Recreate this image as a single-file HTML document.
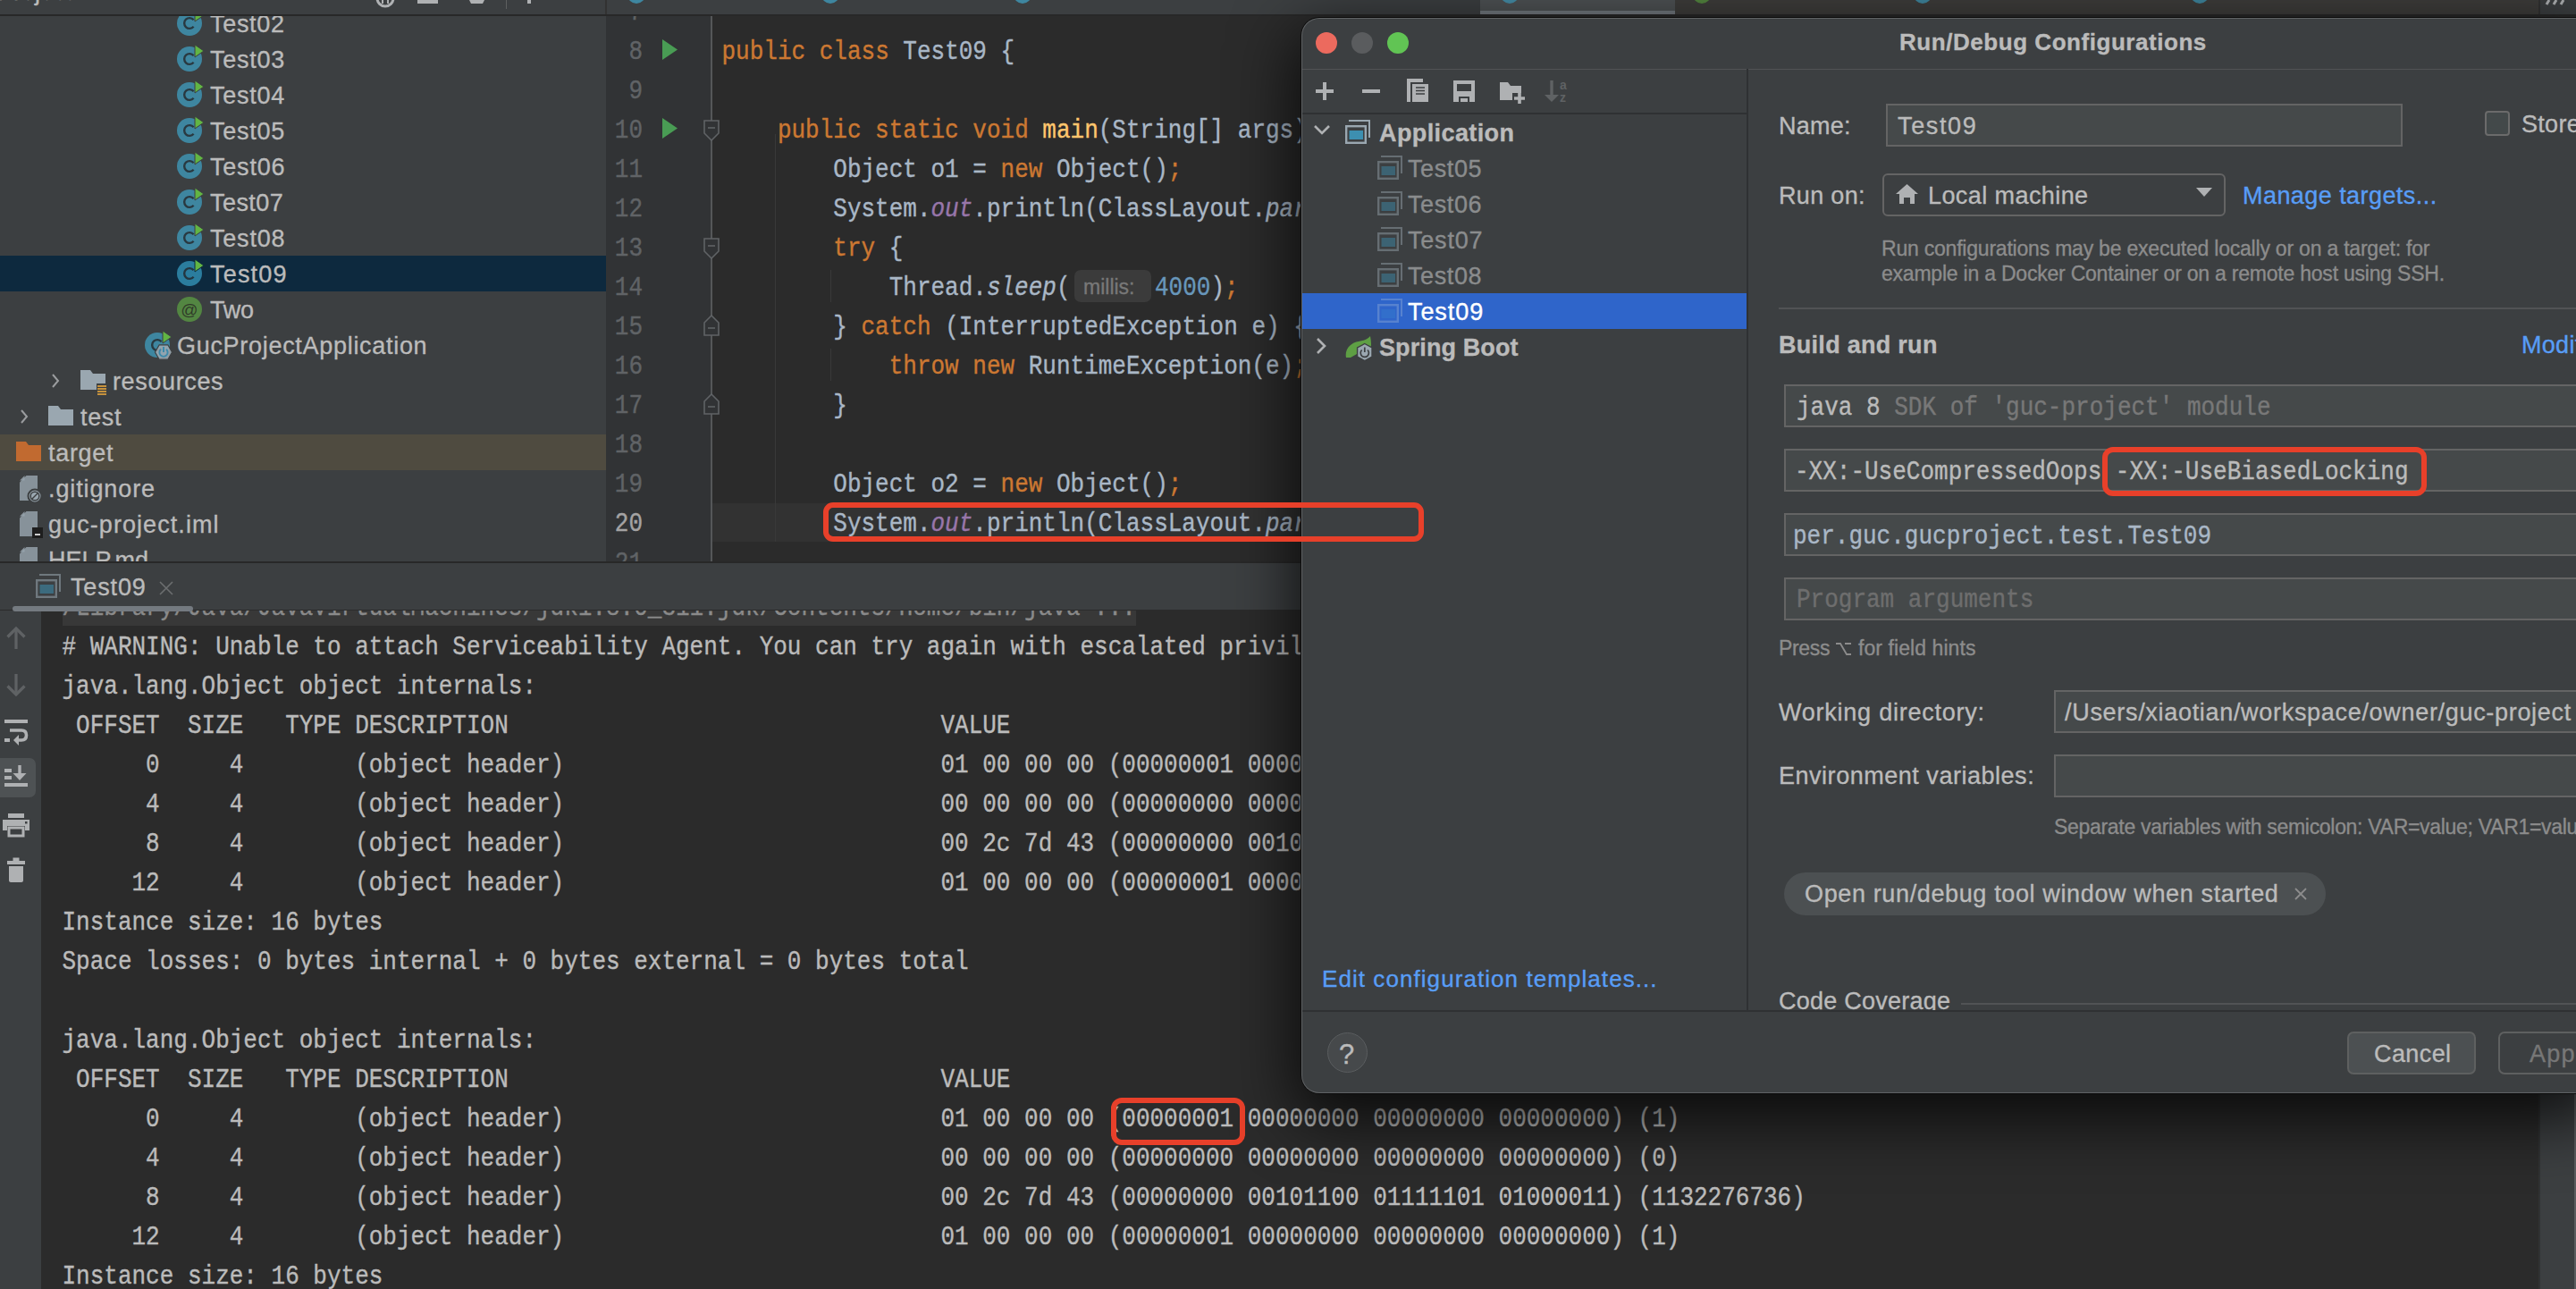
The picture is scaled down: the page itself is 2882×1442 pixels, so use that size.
<!DOCTYPE html>
<html><head><meta charset="utf-8"><style>
html,body{margin:0;padding:0;width:2882px;height:1442px;overflow:hidden;background:#2b2b2b;}
div{position:absolute;box-sizing:border-box;}
.t{line-height:0;white-space:pre;-webkit-text-stroke:0.35px currentColor;}
</style></head><body>
<div style="left:0px;top:0px;width:2882px;height:16px;background:#3c3f41;"></div><div style="left:0px;top:16px;width:2882px;height:2px;background:#282828;"></div><div style="left:0px;top:18px;width:678px;height:610px;background:#3c3f41;"></div><div style="left:678px;top:18px;width:119px;height:610px;background:#313335;"></div><div style="left:797px;top:18px;width:2085px;height:610px;background:#2b2b2b;"></div><div style="left:0px;top:628px;width:2882px;height:2px;background:#282828;"></div><div style="left:0px;top:630px;width:2882px;height:52px;background:#3c3f41;"></div><div style="left:0px;top:683px;width:46px;height:759px;background:#3c3f41;"></div><div style="left:46px;top:683px;width:2796px;height:759px;background:#2b2b2b;"></div><div style="left:2842px;top:683px;width:38px;height:759px;background:#3c3f41;"></div><div style="left:2840px;top:683px;width:2px;height:759px;background:#303233;"></div><div style="left:2880px;top:683px;width:2px;height:759px;background:#5a5c5e;"></div><div style="left:0px;top:18px;width:678px;height:610px;overflow:hidden;"><div style="left:0px;top:268px;width:678px;height:40px;background:#0d293e;"></div><div style="left:0px;top:468px;width:678px;height:40px;background:#4f4b40;"></div><svg style="position:absolute;left:196px;top:-10px;" width="36" height="36" viewBox="0 0 36 36"><circle cx="16" cy="18" r="14" fill="#40b6e0" fill-opacity="0.6"/><path d="M20.6 14.2 A5.9 5.9 0 1 0 20.6 21.8" stroke="#231f20" stroke-opacity="0.75" stroke-width="2.4" fill="none"/><path d="M22 2 L32 9 L22 16Z" fill="#62b543" stroke="#3c3f41" stroke-width="1"/></svg><div class="t" id="f0" style="left:235px;top:9px;font-family:'Liberation Sans', sans-serif;font-size:27px;color:#bbbbbb;letter-spacing:0.680px;">Test02</div><svg style="position:absolute;left:196px;top:30px;" width="36" height="36" viewBox="0 0 36 36"><circle cx="16" cy="18" r="14" fill="#40b6e0" fill-opacity="0.6"/><path d="M20.6 14.2 A5.9 5.9 0 1 0 20.6 21.8" stroke="#231f20" stroke-opacity="0.75" stroke-width="2.4" fill="none"/><path d="M22 2 L32 9 L22 16Z" fill="#62b543" stroke="#3c3f41" stroke-width="1"/></svg><div class="t" id="f1" style="left:235px;top:49px;font-family:'Liberation Sans', sans-serif;font-size:27px;color:#bbbbbb;letter-spacing:0.720px;">Test03</div><svg style="position:absolute;left:196px;top:70px;" width="36" height="36" viewBox="0 0 36 36"><circle cx="16" cy="18" r="14" fill="#40b6e0" fill-opacity="0.6"/><path d="M20.6 14.2 A5.9 5.9 0 1 0 20.6 21.8" stroke="#231f20" stroke-opacity="0.75" stroke-width="2.4" fill="none"/><path d="M22 2 L32 9 L22 16Z" fill="#62b543" stroke="#3c3f41" stroke-width="1"/></svg><div class="t" id="f2" style="left:235px;top:89px;font-family:'Liberation Sans', sans-serif;font-size:27px;color:#bbbbbb;letter-spacing:0.720px;">Test04</div><svg style="position:absolute;left:196px;top:110px;" width="36" height="36" viewBox="0 0 36 36"><circle cx="16" cy="18" r="14" fill="#40b6e0" fill-opacity="0.6"/><path d="M20.6 14.2 A5.9 5.9 0 1 0 20.6 21.8" stroke="#231f20" stroke-opacity="0.75" stroke-width="2.4" fill="none"/><path d="M22 2 L32 9 L22 16Z" fill="#62b543" stroke="#3c3f41" stroke-width="1"/></svg><div class="t" id="f3" style="left:235px;top:129px;font-family:'Liberation Sans', sans-serif;font-size:27px;color:#bbbbbb;letter-spacing:0.720px;">Test05</div><svg style="position:absolute;left:196px;top:150px;" width="36" height="36" viewBox="0 0 36 36"><circle cx="16" cy="18" r="14" fill="#40b6e0" fill-opacity="0.6"/><path d="M20.6 14.2 A5.9 5.9 0 1 0 20.6 21.8" stroke="#231f20" stroke-opacity="0.75" stroke-width="2.4" fill="none"/><path d="M22 2 L32 9 L22 16Z" fill="#62b543" stroke="#3c3f41" stroke-width="1"/></svg><div class="t" id="f4" style="left:235px;top:169px;font-family:'Liberation Sans', sans-serif;font-size:27px;color:#bbbbbb;letter-spacing:0.800px;">Test06</div><svg style="position:absolute;left:196px;top:190px;" width="36" height="36" viewBox="0 0 36 36"><circle cx="16" cy="18" r="14" fill="#40b6e0" fill-opacity="0.6"/><path d="M20.6 14.2 A5.9 5.9 0 1 0 20.6 21.8" stroke="#231f20" stroke-opacity="0.75" stroke-width="2.4" fill="none"/><path d="M22 2 L32 9 L22 16Z" fill="#62b543" stroke="#3c3f41" stroke-width="1"/></svg><div class="t" id="f5" style="left:235px;top:209px;font-family:'Liberation Sans', sans-serif;font-size:27px;color:#bbbbbb;letter-spacing:0.440px;">Test07</div><svg style="position:absolute;left:196px;top:230px;" width="36" height="36" viewBox="0 0 36 36"><circle cx="16" cy="18" r="14" fill="#40b6e0" fill-opacity="0.6"/><path d="M20.6 14.2 A5.9 5.9 0 1 0 20.6 21.8" stroke="#231f20" stroke-opacity="0.75" stroke-width="2.4" fill="none"/><path d="M22 2 L32 9 L22 16Z" fill="#62b543" stroke="#3c3f41" stroke-width="1"/></svg><div class="t" id="f6" style="left:235px;top:249px;font-family:'Liberation Sans', sans-serif;font-size:27px;color:#bbbbbb;letter-spacing:0.800px;">Test08</div><svg style="position:absolute;left:196px;top:270px;" width="36" height="36" viewBox="0 0 36 36"><circle cx="16" cy="18" r="14" fill="#40b6e0" fill-opacity="0.6"/><path d="M20.6 14.2 A5.9 5.9 0 1 0 20.6 21.8" stroke="#231f20" stroke-opacity="0.75" stroke-width="2.4" fill="none"/><path d="M22 2 L32 9 L22 16Z" fill="#62b543" stroke="#0d293e" stroke-width="1"/></svg><div class="t" id="f7" style="left:235px;top:289px;font-family:'Liberation Sans', sans-serif;font-size:27px;color:#bbbbbb;letter-spacing:1.200px;">Test09</div><svg style="position:absolute;left:196px;top:310px;" width="36" height="36" viewBox="0 0 36 36"><circle cx="16" cy="18" r="14" fill="#62b543" fill-opacity="0.6"/><text x="16" y="25" text-anchor="middle" font-family="Liberation Sans" font-size="19" fill="#231f20" fill-opacity="0.75">@</text></svg><div class="t" id="f8" style="left:235px;top:329px;font-family:'Liberation Sans', sans-serif;font-size:27px;color:#bbbbbb;letter-spacing:-0.300px;">Two</div><svg style="position:absolute;left:160px;top:350px;" width="36" height="36" viewBox="0 0 36 36"><circle cx="16" cy="18" r="14" fill="#40b6e0" fill-opacity="0.6"/><path d="M20.6 14.2 A5.9 5.9 0 1 0 20.6 21.8" stroke="#231f20" stroke-opacity="0.75" stroke-width="2.4" fill="none"/><path d="M22 2 L32 9 L22 16Z" fill="#62b543" stroke="#3c3f41" stroke-width="1"/></svg><svg style="position:absolute;left:172px;top:366px;" width="22" height="20" viewBox="0 0 22 20"><path d="M1.5 10 L6.2 1.8 H15.8 L20.5 10 L15.8 18.2 H6.2Z" fill="#9aa7b0" fill-opacity="0.9" stroke="#3c3f41" stroke-width="1.2"/><path d="M8 6.8 A4.6 4.6 0 1 0 14 6.8" fill="none" stroke="#3d8aab" stroke-width="1.9"/><path d="M11 4 V10" stroke="#3d8aab" stroke-width="2"/></svg><div class="t" id="f9" style="left:198px;top:369px;font-family:'Liberation Sans', sans-serif;font-size:27px;color:#bbbbbb;letter-spacing:0.700px;">GucProjectApplication</div><svg style="position:absolute;left:54px;top:398px;" width="16" height="20" viewBox="0 0 16 20"><path d="M5 3 L11 10 L5 17" fill="none" stroke="#9b9d9f" stroke-width="2"/></svg><svg style="position:absolute;left:90px;top:396px;" width="28" height="22" viewBox="0 0 28 22"><path d="M0 0 H11 L14 4 H28 V22 H0Z" fill="#9aa7b0"/></svg><svg style="position:absolute;left:107px;top:410px;" width="14" height="14" viewBox="0 0 14 14"><rect x="1" y="1" width="12" height="12" fill="#3c3f41"/><path d="M2 4H12M2 7H12M2 10H12M2 13H12" stroke="#f4af3d" stroke-width="1.6"/></svg><div class="t" id="f10" style="left:126px;top:409px;font-family:'Liberation Sans', sans-serif;font-size:27px;color:#bbbbbb;letter-spacing:0.625px;">resources</div><svg style="position:absolute;left:19px;top:438px;" width="16" height="20" viewBox="0 0 16 20"><path d="M5 3 L11 10 L5 17" fill="none" stroke="#9b9d9f" stroke-width="2"/></svg><svg style="position:absolute;left:54px;top:436px;" width="28" height="22" viewBox="0 0 28 22"><path d="M0 0 H11 L14 4 H28 V22 H0Z" fill="#9aa7b0"/></svg><div class="t" id="f11" style="left:90px;top:449px;font-family:'Liberation Sans', sans-serif;font-size:27px;color:#bbbbbb;letter-spacing:0.667px;">test</div><svg style="position:absolute;left:18px;top:476px;" width="28" height="22" viewBox="0 0 28 22"><path d="M0 0 H11 L14 4 H28 V22 H0Z" fill="#c16a30"/></svg><div class="t" id="f12" style="left:54px;top:489px;font-family:'Liberation Sans', sans-serif;font-size:27px;color:#bbbbbb;letter-spacing:0.680px;">target</div><svg style="position:absolute;left:22px;top:514px;" width="22" height="28" viewBox="0 0 22 28"><path d="M7.5 0 H20 V28 H0 V7.5Z" fill="#9aa7b0" fill-opacity="0.8"/><path d="M0 5.5 L5.5 0 V5.5Z" fill="#9aa7b0" fill-opacity="0.8"/></svg><svg style="position:absolute;left:30px;top:528px;" width="18" height="18" viewBox="0 0 18 18"><circle cx="9" cy="9" r="7.5" fill="#9aa7b0" stroke="#3c3f41" stroke-width="2"/><circle cx="9" cy="9" r="4.8" fill="none" stroke="#3c3f41" stroke-width="1.5"/><path d="M5.5 12.5 L12.5 5.5" stroke="#3c3f41" stroke-width="1.5"/></svg><div class="t" id="f13" style="left:54px;top:529px;font-family:'Liberation Sans', sans-serif;font-size:27px;color:#bbbbbb;letter-spacing:0.889px;">.gitignore</div><svg style="position:absolute;left:22px;top:554px;" width="22" height="28" viewBox="0 0 22 28"><path d="M7.5 0 H20 V28 H0 V7.5Z" fill="#9aa7b0" fill-opacity="0.8"/><path d="M0 5.5 L5.5 0 V5.5Z" fill="#9aa7b0" fill-opacity="0.8"/></svg><div style="left:36px;top:572px;width:12px;height:12px;background:#1e1e1e;"></div><div style="left:39px;top:579px;width:6px;height:2px;background:#cccccc;"></div><div class="t" id="f14" style="left:54px;top:569px;font-family:'Liberation Sans', sans-serif;font-size:27px;color:#bbbbbb;letter-spacing:1.071px;">guc-project.iml</div><svg style="position:absolute;left:22px;top:594px;" width="22" height="28" viewBox="0 0 22 28"><path d="M7.5 0 H20 V28 H0 V7.5Z" fill="#9aa7b0" fill-opacity="0.8"/><path d="M0 5.5 L5.5 0 V5.5Z" fill="#9aa7b0" fill-opacity="0.8"/></svg><div class="t" style="left:54px;top:609px;font-family:'Liberation Sans', sans-serif;font-size:27px;color:#bbbbbb;">HELP.md</div></div><div style="left:678px;top:18px;width:2204px;height:610px;overflow:hidden;"><div style="left:119px;top:545px;width:2085px;height:43px;background:#323232;"></div><div style="left:189px;top:132px;width:1px;height:456px;background:#393939;"></div><div style="left:251px;top:284px;width:1px;height:36px;background:#393939;"></div><div style="left:251px;top:372px;width:1px;height:36px;background:#393939;"></div><div style="left:117px;top:0px;width:2px;height:610px;background:#555759;"></div><div class="t" style="left:25.399999999999977px;top:-3px;font-family:'Liberation Mono', monospace;font-size:26px;color:#606366;transform:scaleY(1.12);transform-origin:0 7px;">7</div><div class="t" style="left:25.399999999999977px;top:41px;font-family:'Liberation Mono', monospace;font-size:26px;color:#606366;transform:scaleY(1.12);transform-origin:0 7px;">8</div><div class="t" style="left:25.399999999999977px;top:85px;font-family:'Liberation Mono', monospace;font-size:26px;color:#606366;transform:scaleY(1.12);transform-origin:0 7px;">9</div><div class="t" style="left:9.799999999999955px;top:129px;font-family:'Liberation Mono', monospace;font-size:26px;color:#606366;transform:scaleY(1.12);transform-origin:0 7px;">10</div><div class="t" style="left:9.799999999999955px;top:173px;font-family:'Liberation Mono', monospace;font-size:26px;color:#606366;transform:scaleY(1.12);transform-origin:0 7px;">11</div><div class="t" style="left:9.799999999999955px;top:217px;font-family:'Liberation Mono', monospace;font-size:26px;color:#606366;transform:scaleY(1.12);transform-origin:0 7px;">12</div><div class="t" style="left:9.799999999999955px;top:261px;font-family:'Liberation Mono', monospace;font-size:26px;color:#606366;transform:scaleY(1.12);transform-origin:0 7px;">13</div><div class="t" style="left:9.799999999999955px;top:305px;font-family:'Liberation Mono', monospace;font-size:26px;color:#606366;transform:scaleY(1.12);transform-origin:0 7px;">14</div><div class="t" style="left:9.799999999999955px;top:349px;font-family:'Liberation Mono', monospace;font-size:26px;color:#606366;transform:scaleY(1.12);transform-origin:0 7px;">15</div><div class="t" style="left:9.799999999999955px;top:393px;font-family:'Liberation Mono', monospace;font-size:26px;color:#606366;transform:scaleY(1.12);transform-origin:0 7px;">16</div><div class="t" style="left:9.799999999999955px;top:437px;font-family:'Liberation Mono', monospace;font-size:26px;color:#606366;transform:scaleY(1.12);transform-origin:0 7px;">17</div><div class="t" style="left:9.799999999999955px;top:481px;font-family:'Liberation Mono', monospace;font-size:26px;color:#606366;transform:scaleY(1.12);transform-origin:0 7px;">18</div><div class="t" style="left:9.799999999999955px;top:525px;font-family:'Liberation Mono', monospace;font-size:26px;color:#606366;transform:scaleY(1.12);transform-origin:0 7px;">19</div><div class="t" style="left:9.799999999999955px;top:569px;font-family:'Liberation Mono', monospace;font-size:26px;color:#a4a3a3;transform:scaleY(1.12);transform-origin:0 7px;">20</div><div class="t" style="left:9.799999999999955px;top:613px;font-family:'Liberation Mono', monospace;font-size:26px;color:#606366;transform:scaleY(1.12);transform-origin:0 7px;">21</div><svg style="position:absolute;left:63px;top:26px;" width="17" height="23" viewBox="0 0 17 23"><path d="M0 0 L17 11.5 L0 23Z" fill="#499c54"/></svg><svg style="position:absolute;left:63px;top:114px;" width="17" height="23" viewBox="0 0 17 23"><path d="M0 0 L17 11.5 L0 23Z" fill="#499c54"/></svg><svg style="position:absolute;left:109px;top:116px;" width="18" height="24" viewBox="0 0 18 24"><path d="M1 1 H17 V15 L9 23 L1 15Z" fill="#313335" stroke="#606366" stroke-width="1.6"/><path d="M5 9 H13" stroke="#606366" stroke-width="1.6"/></svg><svg style="position:absolute;left:109px;top:248px;" width="18" height="24" viewBox="0 0 18 24"><path d="M1 1 H17 V15 L9 23 L1 15Z" fill="#313335" stroke="#606366" stroke-width="1.6"/><path d="M5 9 H13" stroke="#606366" stroke-width="1.6"/></svg><svg style="position:absolute;left:109px;top:334px;" width="18" height="24" viewBox="0 0 18 24"><path d="M1 23 H17 V9 L9 1 L1 9Z" fill="#313335" stroke="#606366" stroke-width="1.6"/><path d="M5 15 H13" stroke="#606366" stroke-width="1.6"/></svg><svg style="position:absolute;left:109px;top:422px;" width="18" height="24" viewBox="0 0 18 24"><path d="M1 23 H17 V9 L9 1 L1 9Z" fill="#313335" stroke="#606366" stroke-width="1.6"/><path d="M5 15 H13" stroke="#606366" stroke-width="1.6"/></svg><div class="t" style="left:129.5px;top:41px;font-family:'Liberation Mono', monospace;font-size:26px;color:#a9b7c6;transform:scaleY(1.12);transform-origin:0 7px;"><span style="color:#cc7832;">public class </span><span style="color:#a9b7c6;">Test09 {</span></div><div class="t" style="left:191.89999999999998px;top:129px;font-family:'Liberation Mono', monospace;font-size:26px;color:#a9b7c6;transform:scaleY(1.12);transform-origin:0 7px;"><span style="color:#cc7832;">public static void </span><span style="color:#ffc66d;">main</span><span style="color:#a9b7c6;">(String[] args) {</span></div><div class="t" style="left:254.29999999999995px;top:173px;font-family:'Liberation Mono', monospace;font-size:26px;color:#a9b7c6;transform:scaleY(1.12);transform-origin:0 7px;"><span style="color:#a9b7c6;">Object o1 = </span><span style="color:#cc7832;">new </span><span style="color:#a9b7c6;">Object()</span><span style="color:#cc7832;">;</span></div><div class="t" style="left:254.29999999999995px;top:217px;font-family:'Liberation Mono', monospace;font-size:26px;color:#a9b7c6;transform:scaleY(1.12);transform-origin:0 7px;"><span style="color:#a9b7c6;">System.</span><span style="color:#9876aa;font-style:italic;">out</span><span style="color:#a9b7c6;">.println(ClassLayout.</span><span style="color:#a9b7c6;font-style:italic;">parseInstance</span><span style="color:#a9b7c6;">(o1).toPrintable())</span><span style="color:#cc7832;">;</span></div><div class="t" style="left:254.29999999999995px;top:261px;font-family:'Liberation Mono', monospace;font-size:26px;color:#a9b7c6;transform:scaleY(1.12);transform-origin:0 7px;"><span style="color:#cc7832;">try </span><span style="color:#a9b7c6;">{</span></div><div class="t" style="left:316.70000000000005px;top:305px;font-family:'Liberation Mono', monospace;font-size:26px;color:#a9b7c6;transform:scaleY(1.12);transform-origin:0 7px;"><span style="color:#a9b7c6;">Thread.</span><span style="color:#a9b7c6;font-style:italic;">sleep</span><span style="color:#a9b7c6;">(</span></div><div style="left:524px;top:284px;width:86px;height:36px;background:#3b3b3b;border-radius:7px;"></div><div class="t" style="left:534px;top:303px;font-family:'Liberation Sans', sans-serif;font-size:23px;color:#787878;">millis:</div><div class="t" style="left:614px;top:305px;font-family:'Liberation Mono', monospace;font-size:26px;color:#a9b7c6;transform:scaleY(1.12);transform-origin:0 7px;"><span style="color:#6897bb">4000</span>)<span style="color:#cc7832">;</span></div><div class="t" style="left:254.29999999999995px;top:349px;font-family:'Liberation Mono', monospace;font-size:26px;color:#a9b7c6;transform:scaleY(1.12);transform-origin:0 7px;"><span style="color:#a9b7c6;">} </span><span style="color:#cc7832;">catch </span><span style="color:#a9b7c6;">(InterruptedException e) {</span></div><div class="t" style="left:316.70000000000005px;top:393px;font-family:'Liberation Mono', monospace;font-size:26px;color:#a9b7c6;transform:scaleY(1.12);transform-origin:0 7px;"><span style="color:#cc7832;">throw new </span><span style="color:#a9b7c6;">RuntimeException(e)</span><span style="color:#cc7832;">;</span></div><div class="t" style="left:254.29999999999995px;top:437px;font-family:'Liberation Mono', monospace;font-size:26px;color:#a9b7c6;transform:scaleY(1.12);transform-origin:0 7px;"><span style="color:#a9b7c6;">}</span></div><div class="t" style="left:254.29999999999995px;top:525px;font-family:'Liberation Mono', monospace;font-size:26px;color:#a9b7c6;transform:scaleY(1.12);transform-origin:0 7px;"><span style="color:#a9b7c6;">Object o2 = </span><span style="color:#cc7832;">new </span><span style="color:#a9b7c6;">Object()</span><span style="color:#cc7832;">;</span></div><div class="t" style="left:254.29999999999995px;top:569px;font-family:'Liberation Mono', monospace;font-size:26px;color:#a9b7c6;transform:scaleY(1.12);transform-origin:0 7px;"><span style="color:#a9b7c6;">System.</span><span style="color:#9876aa;font-style:italic;">out</span><span style="color:#a9b7c6;">.println(ClassLayout.</span><span style="color:#a9b7c6;font-style:italic;">parseInstance</span><span style="color:#a9b7c6;">(o2).toPrintable())</span><span style="color:#cc7832;">;</span></div></div><div style="left:46px;top:683px;width:2796px;height:759px;overflow:hidden;"><div style="left:24px;top:0px;width:1201px;height:17px;background:#383838;"></div><div class="t" style="left:23.5px;top:-2px;font-family:'Liberation Mono', monospace;font-size:26px;color:#8a8a8a;transform:scaleY(1.12);transform-origin:0 7px;">/Library/Java/JavaVirtualMachines/jdk1.8.0_311.jdk/Contents/Home/bin/java ...</div><div class="t" style="left:23.5px;top:42px;font-family:'Liberation Mono', monospace;font-size:26px;color:#bbbbbb;transform:scaleY(1.12);transform-origin:0 7px;"># WARNING: Unable to attach Serviceability Agent. You can try again with escalated privileges. Two options: a) use -Djol.tryWithSudo=true to try with sudo; b) echo 0 | sudo tee /proc/sys/kernel/yama/ptrace_scope</div><div class="t" style="left:23.5px;top:86px;font-family:'Liberation Mono', monospace;font-size:26px;color:#bbbbbb;transform:scaleY(1.12);transform-origin:0 7px;">java.lang.Object object internals:</div><div class="t" style="left:23.5px;top:130px;font-family:'Liberation Mono', monospace;font-size:26px;color:#bbbbbb;transform:scaleY(1.12);transform-origin:0 7px;"> OFFSET  SIZE   TYPE DESCRIPTION                               VALUE</div><div class="t" style="left:23.5px;top:174px;font-family:'Liberation Mono', monospace;font-size:26px;color:#bbbbbb;transform:scaleY(1.12);transform-origin:0 7px;">      0     4        (object header)                           01 00 00 00 (00000001 00000000 00000000 00000000) (1)</div><div class="t" style="left:23.5px;top:218px;font-family:'Liberation Mono', monospace;font-size:26px;color:#bbbbbb;transform:scaleY(1.12);transform-origin:0 7px;">      4     4        (object header)                           00 00 00 00 (00000000 00000000 00000000 00000000) (0)</div><div class="t" style="left:23.5px;top:262px;font-family:'Liberation Mono', monospace;font-size:26px;color:#bbbbbb;transform:scaleY(1.12);transform-origin:0 7px;">      8     4        (object header)                           00 2c 7d 43 (00000000 00101100 01111101 01000011) (1132276736)</div><div class="t" style="left:23.5px;top:306px;font-family:'Liberation Mono', monospace;font-size:26px;color:#bbbbbb;transform:scaleY(1.12);transform-origin:0 7px;">     12     4        (object header)                           01 00 00 00 (00000001 00000000 00000000 00000000) (1)</div><div class="t" style="left:23.5px;top:350px;font-family:'Liberation Mono', monospace;font-size:26px;color:#bbbbbb;transform:scaleY(1.12);transform-origin:0 7px;">Instance size: 16 bytes</div><div class="t" style="left:23.5px;top:394px;font-family:'Liberation Mono', monospace;font-size:26px;color:#bbbbbb;transform:scaleY(1.12);transform-origin:0 7px;">Space losses: 0 bytes internal + 0 bytes external = 0 bytes total</div><div class="t" style="left:23.5px;top:482px;font-family:'Liberation Mono', monospace;font-size:26px;color:#bbbbbb;transform:scaleY(1.12);transform-origin:0 7px;">java.lang.Object object internals:</div><div class="t" style="left:23.5px;top:526px;font-family:'Liberation Mono', monospace;font-size:26px;color:#bbbbbb;transform:scaleY(1.12);transform-origin:0 7px;"> OFFSET  SIZE   TYPE DESCRIPTION                               VALUE</div><div class="t" style="left:23.5px;top:570px;font-family:'Liberation Mono', monospace;font-size:26px;color:#bbbbbb;transform:scaleY(1.12);transform-origin:0 7px;">      0     4        (object header)                           01 00 00 00 (00000001 00000000 00000000 00000000) (1)</div><div class="t" style="left:23.5px;top:614px;font-family:'Liberation Mono', monospace;font-size:26px;color:#bbbbbb;transform:scaleY(1.12);transform-origin:0 7px;">      4     4        (object header)                           00 00 00 00 (00000000 00000000 00000000 00000000) (0)</div><div class="t" style="left:23.5px;top:658px;font-family:'Liberation Mono', monospace;font-size:26px;color:#bbbbbb;transform:scaleY(1.12);transform-origin:0 7px;">      8     4        (object header)                           00 2c 7d 43 (00000000 00101100 01111101 01000011) (1132276736)</div><div class="t" style="left:23.5px;top:702px;font-family:'Liberation Mono', monospace;font-size:26px;color:#bbbbbb;transform:scaleY(1.12);transform-origin:0 7px;">     12     4        (object header)                           01 00 00 00 (00000001 00000000 00000000 00000000) (1)</div><div class="t" style="left:23.5px;top:746px;font-family:'Liberation Mono', monospace;font-size:26px;color:#bbbbbb;transform:scaleY(1.12);transform-origin:0 7px;">Instance size: 16 bytes</div><div class="t" style="left:23.5px;top:790px;font-family:'Liberation Mono', monospace;font-size:26px;color:#bbbbbb;transform:scaleY(1.12);transform-origin:0 7px;">Space losses: 0 bytes internal + 0 bytes external = 0 bytes total</div></div><div style="left:1243px;top:1228px;width:150px;height:53px;background:transparent;border:6px solid #e8402a;border-radius:12px;"></div><svg style="position:absolute;left:40px;top:642px;" width="30" height="28" viewBox="0 0 30 28"><g opacity="0.55"><path d="M4 0H28V20H26V2H4Z" fill="#9aa7b0"/><rect x="1.2" y="7.2" width="21.6" height="18.6" fill="none" stroke="#9aa7b0" stroke-width="2.4"/><rect x="4.5" y="12" width="15.5" height="10" fill="#3d8fb0"/></g></svg><div class="t" id="f15" style="left:79px;top:657px;font-family:'Liberation Sans', sans-serif;font-size:27px;color:#bbbbbb;letter-spacing:0.840px;">Test09</div><svg style="position:absolute;left:177px;top:649px;" width="18" height="18" viewBox="0 0 18 18"><path d="M2 2L16 16M16 2L2 16" stroke="#6c6e70" stroke-width="1.6"/></svg><div style="left:14px;top:678px;width:202px;height:6px;background:#747a80;border-radius:3px;"></div><svg style="position:absolute;left:4px;top:700px;" width="28" height="28" viewBox="0 0 28 28"><path d="M14 3V26" stroke="#5f6264" stroke-width="3.2"/><path d="M4.5 12.5L14 3L23.5 12.5" fill="none" stroke="#5f6264" stroke-width="3.2"/></svg><svg style="position:absolute;left:4px;top:752px;" width="28" height="28" viewBox="0 0 28 28"><path d="M14 2V25" stroke="#5f6264" stroke-width="3.2"/><path d="M4.5 15.5L14 25L23.5 15.5" fill="none" stroke="#5f6264" stroke-width="3.2"/></svg><svg style="position:absolute;left:3px;top:803px;" width="30" height="32" viewBox="0 0 30 32"><path d="M2 4H28" stroke="#afb1b3" stroke-width="4"/><path d="M2 25H8" stroke="#afb1b3" stroke-width="4"/><path d="M8 14H21C25 14 26.5 16.5 26.5 19.5C26.5 22.5 25 25 21 25H16" fill="none" stroke="#afb1b3" stroke-width="3.6"/><path d="M18 19L12 25L18 31Z" fill="#afb1b3"/></svg><div style="left:0px;top:848px;width:40px;height:44px;background:#4e5254;border-radius:0 7px 7px 0;"></div><svg style="position:absolute;left:3px;top:854px;" width="30" height="32" viewBox="0 0 30 32"><path d="M2 8H10M2 16H10M2 24H28" stroke="#afb1b3" stroke-width="4"/><path d="M19 2V16" stroke="#afb1b3" stroke-width="3.4"/><path d="M11.5 11H26.5L19 19Z" fill="#afb1b3"/></svg><svg style="position:absolute;left:2px;top:908px;" width="32" height="30" viewBox="0 0 32 30"><path d="M7 2H25V7H7Z" fill="#afb1b3"/><path d="M1 9H31V21H26V16H6V21H1Z" fill="#afb1b3"/><path d="M8 18H24V27H8Z" fill="none" stroke="#afb1b3" stroke-width="3"/><rect x="26" y="11" width="2.5" height="2.5" fill="#3c3f41"/></svg><svg style="position:absolute;left:6px;top:958px;" width="28" height="30" viewBox="0 0 28 30"><path d="M2 5H22V9H2Z" fill="#afb1b3"/><path d="M8.5 1.5H15.5V5H8.5Z" fill="#afb1b3"/><path d="M4 11H20V27C20 28 19 29 18 29H6C5 29 4 28 4 27Z" fill="#afb1b3"/></svg><div class="t" style="left:-3px;top:-9px;font-family:'Liberation Sans', sans-serif;font-size:27px;color:#bbbbbb;">Project</div><svg style="position:absolute;left:420px;top:0px;" width="200" height="16" viewBox="0 0 200 16"><circle cx="11" cy="-2" r="9" fill="none" stroke="#afb1b3" stroke-width="3"/><path d="M8 -4V4M14 -4V4" stroke="#afb1b3" stroke-width="2"/><rect x="47" y="0" width="23" height="4" fill="#afb1b3"/><path d="M105 0H122L120 4H107Z" fill="#afb1b3"/><rect x="146" y="0" width="1" height="10" fill="#5e6060"/><rect x="170" y="0" width="4" height="4" fill="#afb1b3"/></svg><div style="left:677px;top:0px;width:2px;height:16px;background:#323232;"></div><div style="left:1656px;top:0px;width:218px;height:16px;background:#4e5254;"></div><div style="left:1656px;top:12px;width:218px;height:4px;background:#747a80;"></div><div style="left:1874px;top:0px;width:966px;height:16px;background:#3e3d3b;"></div><div style="left:2840px;top:0px;width:2px;height:16px;background:#323232;"></div><svg style="position:absolute;left:702px;top:0px;" width="20" height="4" viewBox="0 0 20 4"><circle cx="10" cy="-6" r="10" fill="#40b6e0" fill-opacity="0.6"/></svg><svg style="position:absolute;left:919px;top:0px;" width="20" height="4" viewBox="0 0 20 4"><circle cx="10" cy="-6" r="10" fill="#40b6e0" fill-opacity="0.6"/></svg><svg style="position:absolute;left:1134px;top:0px;" width="20" height="4" viewBox="0 0 20 4"><circle cx="10" cy="-6" r="10" fill="#40b6e0" fill-opacity="0.6"/></svg><svg style="position:absolute;left:1679px;top:0px;" width="20" height="4" viewBox="0 0 20 4"><circle cx="10" cy="-6" r="10" fill="#40b6e0" fill-opacity="0.6"/></svg><svg style="position:absolute;left:1894px;top:0px;" width="20" height="4" viewBox="0 0 20 4"><circle cx="10" cy="-6" r="10" fill="#62b543" fill-opacity="0.6"/></svg><svg style="position:absolute;left:2141px;top:0px;" width="20" height="4" viewBox="0 0 20 4"><circle cx="10" cy="-6" r="10" fill="#40b6e0" fill-opacity="0.6"/></svg><svg style="position:absolute;left:2451px;top:0px;" width="20" height="4" viewBox="0 0 20 4"><circle cx="10" cy="-6" r="10" fill="#40b6e0" fill-opacity="0.6"/></svg><svg style="position:absolute;left:2846px;top:0px;" width="28" height="6" viewBox="0 0 28 6"><path d="M3 5 L6 0 M11 5 L14 0 M19 5 L22 0" stroke="#afb1b3" stroke-width="3"/></svg><div style="left:1455px;top:19px;width:1447px;height:1205px;border-radius:21px;box-shadow:0 22px 70px 6px rgba(0,0,0,0.75);"></div><div style="left:1455px;top:19px;width:1447px;height:1205px;border-radius:21px;background:#0b0b0b;"></div><div style="left:1456px;top:20px;width:1445px;height:1203px;border-radius:20px;background:#606365;"></div><div style="left:1457px;top:21px;width:1443px;height:1201px;overflow:hidden;border-radius:19px;background:#3c3f41;"><svg style="position:absolute;left:13px;top:13px;" width="110" height="28" viewBox="0 0 110 28"><circle cx="14" cy="14" r="12" fill="#ec6a5e"/><circle cx="54" cy="14" r="12" fill="#5a5c5e"/><circle cx="94" cy="14" r="12" fill="#61c454"/></svg><div class="t" id="f16" style="left:668px;top:26px;font-family:'Liberation Sans', sans-serif;font-size:26px;color:#bbbbbb;font-weight:bold;letter-spacing:0.547px;">Run/Debug Configurations</div><div style="left:-1px;top:56px;width:1426px;height:1px;background:#515355;"></div><svg style="position:absolute;left:13px;top:65px;" width="300" height="32" viewBox="0 0 300 32"><path d="M2 16H22M12 6V26" stroke="#afb1b3" stroke-width="4"/><path d="M54 16H74" stroke="#afb1b3" stroke-width="4"/><path d="M104 2H122V6H108V28H104Z" fill="#afb1b3"/><path d="M110 8H128V28H110Z" fill="#afb1b3"/><path d="M114 12H124M114 15.5H124M114 19H124" stroke="#3c3f41" stroke-width="1.6"/><path d="M156 4H180V28H156Z" fill="#afb1b3"/><path d="M160 8H176V16H160Z" fill="#3c3f41"/><path d="M162 22H174V28H162Z" fill="#3c3f41"/><path d="M164 24H172V28H164Z" fill="#afb1b3"/><path d="M208 6H217L220 10H232V26H208Z" fill="#afb1b3"/><path d="M222 18H236V30H222Z" fill="#3c3f41"/><path d="M224 24H236M230 18V30" stroke="#afb1b3" stroke-width="3.6"/><path d="M266 4V22" stroke="#5f6264" stroke-width="3.4"/><path d="M258 20H274L266 28Z" fill="#5f6264"/><text x="275" y="14" font-family="Liberation Sans" font-weight="bold" font-size="14" fill="#5f6264">a</text><text x="275" y="28" font-family="Liberation Sans" font-weight="bold" font-size="14" fill="#5f6264">z</text></svg><div style="left:-1px;top:105px;width:498px;height:2px;background:#2f3133;"></div><div style="left:497px;top:56px;width:2px;height:1054px;background:#2f3133;"></div><svg style="position:absolute;left:11px;top:117px;" width="22" height="16" viewBox="0 0 22 16"><path d="M3 3 L11 11 L19 3" fill="none" stroke="#afb1b3" stroke-width="2.6"/></svg><svg style="position:absolute;left:48px;top:113px;" width="30" height="28" viewBox="0 0 30 28"><g opacity="1.0"><path d="M4 0H28V20H26V2H4Z" fill="#9aa7b0"/><rect x="1.2" y="7.2" width="21.6" height="18.6" fill="none" stroke="#9aa7b0" stroke-width="2.4"/><rect x="4.5" y="12" width="15.5" height="10" fill="#3d8fb0"/></g></svg><div class="t" id="f17" style="left:86px;top:128px;font-family:'Liberation Sans', sans-serif;font-size:27px;color:#bbbbbb;font-weight:bold;letter-spacing:0.400px;">Application</div><svg style="position:absolute;left:84px;top:153px;" width="30" height="28" viewBox="0 0 30 28"><g opacity="0.45"><path d="M4 0H28V20H26V2H4Z" fill="#9aa7b0"/><rect x="1.2" y="7.2" width="21.6" height="18.6" fill="none" stroke="#9aa7b0" stroke-width="2.4"/><rect x="4.5" y="12" width="15.5" height="10" fill="#3d8fb0"/></g></svg><div class="t" id="f18" style="left:118px;top:168px;font-family:'Liberation Sans', sans-serif;font-size:27px;color:#8a8c8d;letter-spacing:0.600px;">Test05</div><svg style="position:absolute;left:84px;top:193px;" width="30" height="28" viewBox="0 0 30 28"><g opacity="0.45"><path d="M4 0H28V20H26V2H4Z" fill="#9aa7b0"/><rect x="1.2" y="7.2" width="21.6" height="18.6" fill="none" stroke="#9aa7b0" stroke-width="2.4"/><rect x="4.5" y="12" width="15.5" height="10" fill="#3d8fb0"/></g></svg><div class="t" id="f19" style="left:118px;top:208px;font-family:'Liberation Sans', sans-serif;font-size:27px;color:#8a8c8d;letter-spacing:0.600px;">Test06</div><svg style="position:absolute;left:84px;top:233px;" width="30" height="28" viewBox="0 0 30 28"><g opacity="0.45"><path d="M4 0H28V20H26V2H4Z" fill="#9aa7b0"/><rect x="1.2" y="7.2" width="21.6" height="18.6" fill="none" stroke="#9aa7b0" stroke-width="2.4"/><rect x="4.5" y="12" width="15.5" height="10" fill="#3d8fb0"/></g></svg><div class="t" id="f20" style="left:118px;top:248px;font-family:'Liberation Sans', sans-serif;font-size:27px;color:#8a8c8d;letter-spacing:0.800px;">Test07</div><svg style="position:absolute;left:84px;top:273px;" width="30" height="28" viewBox="0 0 30 28"><g opacity="0.45"><path d="M4 0H28V20H26V2H4Z" fill="#9aa7b0"/><rect x="1.2" y="7.2" width="21.6" height="18.6" fill="none" stroke="#9aa7b0" stroke-width="2.4"/><rect x="4.5" y="12" width="15.5" height="10" fill="#3d8fb0"/></g></svg><div class="t" id="f21" style="left:118px;top:288px;font-family:'Liberation Sans', sans-serif;font-size:27px;color:#8a8c8d;letter-spacing:0.600px;">Test08</div><div style="left:-1px;top:307px;width:498px;height:40px;background:#2f65ca;"></div><svg style="position:absolute;left:84px;top:313px;" width="30" height="28" viewBox="0 0 30 28"><g opacity="0.25"><path d="M4 0H28V20H26V2H4Z" fill="#cfd8e0"/><rect x="1.2" y="7.2" width="21.6" height="18.6" fill="none" stroke="#cfd8e0" stroke-width="2.4"/><rect x="4.5" y="12" width="15.5" height="10" fill="#3d8fd0"/></g></svg><div class="t" id="f22" style="left:118px;top:328px;font-family:'Liberation Sans', sans-serif;font-size:27px;color:#ffffff;letter-spacing:0.920px;">Test09</div><svg style="position:absolute;left:13px;top:356px;" width="16" height="20" viewBox="0 0 16 20"><path d="M4 2 L12 10 L4 18" fill="none" stroke="#afb1b3" stroke-width="2.6"/></svg><svg style="position:absolute;left:47px;top:353px;" width="34" height="30" viewBox="0 0 34 30"><path d="M2 26 C0 16 8 9 16 8 C22 7 27 5 29 2 C30 8 31 14 28 18 L14 22 L7 26Z" fill="#5e9f44"/><path d="M22.8 10.5 L31 15 L31 25 L22.8 29.5 L14.6 25 L14.6 15Z" fill="#9aa7b0" stroke="#3c3f41" stroke-width="1.4"/><path d="M19.6 17.5 A4.6 4.6 0 1 0 26 17.5" fill="none" stroke="#3c3f41" stroke-width="1.7"/><path d="M22.8 14.5V20" stroke="#3c3f41" stroke-width="1.7"/></svg><div class="t" id="f23" style="left:86px;top:368px;font-family:'Liberation Sans', sans-serif;font-size:27px;color:#bbbbbb;font-weight:bold;letter-spacing:0.100px;">Spring Boot</div><div class="t" id="f24" style="left:22px;top:1074px;font-family:'Liberation Sans', sans-serif;font-size:26px;color:#589df6;letter-spacing:1.067px;">Edit configuration templates...</div><div style="left:-1px;top:1109px;width:498px;height:2px;background:#2f3133;"></div><div style="left:497px;top:1109px;width:930px;height:2px;background:#2f3133;"></div><div style="left:28px;top:1134px;width:45px;height:45px;border-radius:50%;background:#46494b;border:1.5px solid #5a5d5f;"></div><div class="t" style="left:41px;top:1159px;font-family:'Liberation Sans', sans-serif;font-size:31px;color:#bbbbbb;">?</div><div style="left:1169px;top:1133px;width:144px;height:48px;border-radius:7px;background:#4c5052;border:2px solid #5e6060;"></div><div class="t" id="f25" style="left:1199px;top:1158px;font-family:'Liberation Sans', sans-serif;font-size:27px;color:#bbbbbb;letter-spacing:0.400px;">Cancel</div><div style="left:1338px;top:1133px;width:144px;height:48px;border-radius:7px;background:#3c3f41;border:2px solid #5e6060;"></div><div class="t" style="left:1373px;top:1158px;font-family:'Liberation Sans', sans-serif;font-size:27px;color:#777777;letter-spacing:1.2px;">Apply</div><div style="left:499px;top:57px;width:926px;height:1052px;overflow:hidden;"><div class="t" id="f26" style="left:34px;top:63px;font-family:'Liberation Sans', sans-serif;font-size:27px;color:#bbbbbb;letter-spacing:0.250px;">Name:</div><div style="left:154px;top:38px;width:578px;height:48px;background:#45494a;border:2px solid #646464;"></div><div class="t" id="f27" style="left:167px;top:63px;font-family:'Liberation Sans', sans-serif;font-size:27px;color:#bbbbbb;letter-spacing:1.640px;">Test09</div><div style="left:824px;top:46px;width:28px;height:28px;border-radius:4px;background:#43494a;border:2px solid #6b6b6b;"></div><div class="t" style="left:865px;top:61px;font-family:'Liberation Sans', sans-serif;font-size:27px;color:#bbbbbb;letter-spacing:0.3px;">Store as project file</div><div class="t" id="f28" style="left:34px;top:141px;font-family:'Liberation Sans', sans-serif;font-size:27px;color:#bbbbbb;letter-spacing:0.333px;">Run on:</div><div style="left:150px;top:116px;width:384px;height:48px;border-radius:6px;background:#3c3f41;border:2px solid #646464;"></div><svg style="position:absolute;left:164px;top:127px;" width="28" height="24" viewBox="0 0 28 24"><path d="M13.5 1 L26 12 H22 V23 H17 V16 H10 V23 H5 V12 H1Z" fill="#afb1b3"/></svg><div class="t" id="f29" style="left:201px;top:141px;font-family:'Liberation Sans', sans-serif;font-size:27px;color:#bbbbbb;letter-spacing:0.417px;">Local machine</div><svg style="position:absolute;left:500px;top:131px;" width="20" height="12" viewBox="0 0 20 12"><path d="M1 1 H19 L10 11Z" fill="#afb1b3"/></svg><div class="t" id="f30" style="left:553px;top:141px;font-family:'Liberation Sans', sans-serif;font-size:27px;color:#589df6;letter-spacing:0.438px;">Manage targets...</div><div class="t" id="f31" style="left:149px;top:200px;font-family:'Liberation Sans', sans-serif;font-size:23px;color:#8c8c8c;letter-spacing:-0.213px;">Run configurations may be executed locally or on a target: for</div><div class="t" id="f32" style="left:149px;top:228px;font-family:'Liberation Sans', sans-serif;font-size:23px;color:#8c8c8c;letter-spacing:-0.220px;">example in a Docker Container or on a remote host using SSH.</div><div style="left:34px;top:266px;width:900px;height:2px;background:#515355;"></div><div class="t" id="f33" style="left:34px;top:308px;font-family:'Liberation Sans', sans-serif;font-size:27px;color:#bbbbbb;font-weight:bold;letter-spacing:0.284px;">Build and run</div><div class="t" style="left:865px;top:308px;font-family:'Liberation Sans', sans-serif;font-size:27px;color:#589df6;letter-spacing:0.3px;">Modify options</div><div style="left:40px;top:352px;width:900px;height:48px;background:#45494a;border:2px solid #646464;"></div><div style="left:40px;top:424px;width:900px;height:48px;background:#45494a;border:2px solid #646464;"></div><div style="left:40px;top:496px;width:900px;height:48px;background:#45494a;border:2px solid #646464;"></div><div style="left:40px;top:568px;width:900px;height:48px;background:#45494a;border:2px solid #646464;"></div><div class="t" style="left:54px;top:379px;font-family:'Liberation Mono', monospace;font-size:26px;color:#bbbbbb;transform:scaleY(1.12);transform-origin:0 7px;"><span style="color:#bbbbbb">java 8</span> <span style="color:#787878">SDK of 'guc-project' module</span></div><div class="t" style="left:52px;top:451px;font-family:'Liberation Mono', monospace;font-size:26px;color:#bbbbbb;transform:scaleY(1.12);transform-origin:0 7px;">-XX:-UseCompressedOops -XX:-UseBiasedLocking</div><div class="t" style="left:50px;top:523px;font-family:'Liberation Mono', monospace;font-size:26px;color:#a9b7c6;transform:scaleY(1.12);transform-origin:0 7px;">per.guc.gucproject.test.Test09</div><div class="t" style="left:54px;top:594px;font-family:'Liberation Mono', monospace;font-size:26px;color:#6e6e6e;transform:scaleY(1.12);transform-origin:0 7px;">Program arguments</div><div style="left:396px;top:422px;width:363px;height:55px;background:transparent;border:6.5px solid #e8402a;border-radius:12px;"></div><div class="t" id="f34" style="left:34px;top:647px;font-family:'Liberation Sans', sans-serif;font-size:23px;color:#8c8c8c;letter-spacing:-0.318px;">Press</div><svg style="position:absolute;left:97px;top:640px;" width="19" height="16" viewBox="0 0 19 16"><path d="M1 2H6L13 14H18M11 2H18" fill="none" stroke="#8c8c8c" stroke-width="1.8"/></svg><div class="t" id="f35" style="left:123px;top:647px;font-family:'Liberation Sans', sans-serif;font-size:23px;color:#8c8c8c;letter-spacing:0.072px;">for field hints</div><div class="t" id="f36" style="left:34px;top:719px;font-family:'Liberation Sans', sans-serif;font-size:27px;color:#bbbbbb;letter-spacing:0.765px;">Working directory:</div><div style="left:342px;top:694px;width:620px;height:48px;background:#45494a;border:2px solid #646464;"></div><div class="t" id="f37" style="left:354px;top:719px;font-family:'Liberation Sans', sans-serif;font-size:27px;color:#bbbbbb;letter-spacing:0.690px;">/Users/xiaotian/workspace/owner/guc-project</div><div class="t" id="f38" style="left:34px;top:790px;font-family:'Liberation Sans', sans-serif;font-size:27px;color:#bbbbbb;letter-spacing:0.524px;">Environment variables:</div><div style="left:342px;top:766px;width:620px;height:48px;background:#45494a;border:2px solid #646464;"></div><div class="t" style="left:342px;top:847px;font-family:'Liberation Sans', sans-serif;font-size:23px;color:#8c8c8c;letter-spacing:-0.3px;">Separate variables with semicolon: VAR=value; VAR1=value1</div><div style="left:40px;top:898px;width:606px;height:48px;border-radius:24px;background:#4c5052;"></div><div class="t" id="f39" style="left:63px;top:922px;font-family:'Liberation Sans', sans-serif;font-size:27px;color:#bbbbbb;letter-spacing:0.632px;">Open run/debug tool window when started</div><svg style="position:absolute;left:610px;top:914px;" width="16" height="16" viewBox="0 0 16 16"><path d="M2 2L14 14M14 2L2 14" stroke="#8c8c8c" stroke-width="1.8"/></svg><div class="t" id="f40" style="left:34px;top:1042px;font-family:'Liberation Sans', sans-serif;font-size:27px;color:#bbbbbb;letter-spacing:0.250px;">Code Coverage</div><div style="left:238px;top:1044px;width:700px;height:2px;background:#515355;"></div></div><div style="left:499px;top:1109px;width:930px;height:2px;background:#2f3133;"></div></div><div style="left:921px;top:562px;width:672px;height:44px;background:transparent;border:6px solid #e8402a;border-radius:11px;"></div>
</body></html>
